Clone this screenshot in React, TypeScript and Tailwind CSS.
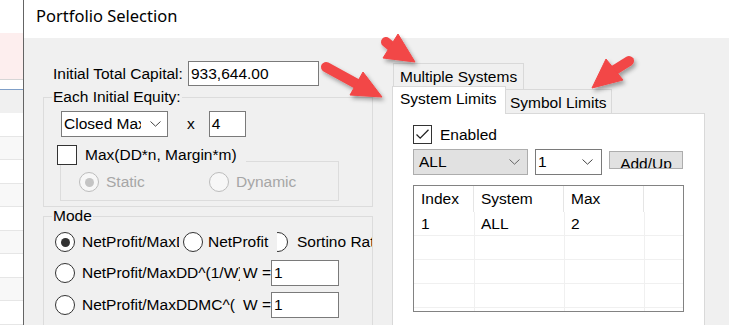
import React from "react";

const Chevron = ({ color = "#444" }: { color?: string }) => (
  <svg width="11" height="6" viewBox="0 0 11 6" className="shrink-0">
    <path d="M0.5 0.5 L5.5 5.2 L10.5 0.5" fill="none" stroke={color} strokeWidth="1" />
  </svg>
);

const Radio = ({ checked = false, disabled = false }: { checked?: boolean; disabled?: boolean }) => (
  <span
    className={
      "w-[20px] h-[20px] shrink-0 rounded-full border flex items-center justify-center " +
      (disabled ? "border-[#bcbcbc] bg-[#f7f7f7]" : "border-[#333333] bg-white")
    }
  >
    {checked && (
      <span className={"w-[9px] h-[9px] rounded-full " + (disabled ? "bg-[#c4c4c4]" : "bg-[#333333]")} />
    )}
  </span>
);

const LeftStrip = () => (
  <div className="w-[23px] shrink-0 flex flex-col bg-white">
    <div className="h-[33px] bg-white" />
    <div className="h-[47px] bg-[#fdeeee]" />
    <div className="h-px bg-[#d6d6d6]" />
    <div className="h-[9px] bg-white" />
    <div className="h-px bg-[#7f9fc8]" />
    <div className="h-[23px] bg-[#f0f0f0]" />
    <div className="h-px bg-[#7f9fc8]" />
    {[0, 1, 2, 3, 4, 5, 6, 7, 8].map((i) => (
      <div key={i} className={"h-[23.5px] shrink-0 border-b border-[#e6e6e6] " + (i % 2 ? "bg-[#f8f8f8]" : "bg-white")} />
    ))}
  </div>
);

const Arrows = () => (
  <svg className="absolute inset-0 pointer-events-none" width="729" height="325" viewBox="0 0 729 325">
    <defs>
      <filter id="sh" x="-30%" y="-30%" width="160%" height="160%">
        <feDropShadow dx="2" dy="3" stdDeviation="2" floodColor="#000" floodOpacity="0.35" />
      </filter>
    </defs>
    <g fill="#f24646" stroke="#f24646" filter="url(#sh)">
      <line x1="386" y1="42" x2="392" y2="47" strokeWidth="10" strokeLinecap="round" />
      <polygon points="398,34 415,62 383,58" strokeWidth="1" strokeLinejoin="round" />
      <line x1="326" y1="67" x2="357" y2="84" strokeWidth="10" strokeLinecap="round" />
      <polygon points="363,72 382,97 350,95" strokeWidth="1" strokeLinejoin="round" />
      <line x1="629" y1="61" x2="613" y2="71" strokeWidth="10" strokeLinecap="round" />
      <polygon points="606,59 623,80 592,88" strokeWidth="1" strokeLinejoin="round" />
    </g>
  </svg>
);

export default function App() {
  return (
    <div className="relative w-[729px] h-[325px] overflow-hidden flex bg-white text-black font-['Liberation_Sans',Arial,sans-serif] text-[15.5px] leading-[18px]">
      <LeftStrip />
      <div className="w-px shrink-0 bg-[#646464]" />
      <div className="flex-1 flex flex-col min-w-0">
        {/* title bar */}
        <div className="h-[38px] shrink-0 bg-white pl-[12px] pt-[4px]">
          <span className="font-['Noto_Sans',sans-serif] text-[16.5px] leading-[24px] text-black">Portfolio Selection</span>
        </div>
        {/* body */}
        <div className="h-[300px] shrink-0 bg-[#f0f0f0] flex pl-[19px]">
          {/* left column */}
          <div className="w-[330px] shrink-0 flex flex-col">
            <div className="mt-[23px] flex items-center h-[25px]">
              <span className="w-[145px] pl-[10px] shrink-0 whitespace-nowrap">Initial Total Capital:</span>
              <div className="w-[131px] h-[25px] border border-[#7a7a7a] bg-white flex items-center pl-[2px]">933,644.00</div>
            </div>

            <fieldset className="mt-[2px] w-[330px] min-w-0 border border-[#dcdcdc] pb-[5px]">
              <legend className="ml-[8px] px-[1px] leading-[18px]">Each Initial Equity:</legend>
              <div className="mt-[5px] pl-[17px] flex items-center h-[26px]">
                <div className="w-[107px] h-[26px] border border-[#7a7a7a] bg-white flex items-center pl-[2px] pr-[6px]">
                  <span className="w-[77px] overflow-hidden whitespace-nowrap">Closed Max</span>
                  <span className="ml-auto">
                    <Chevron />
                  </span>
                </div>
                <span className="ml-[19px]">x</span>
                <div className="ml-[14px] w-[37px] h-[26px] border border-[#7a7a7a] bg-white flex items-center pl-[2px]">4</div>
              </div>
              <div className="relative z-10 mt-[8px] ml-[13px] w-fit pr-[9px] bg-[#f0f0f0] flex items-center">
                <span className="w-[20px] h-[20px] border border-[#333333] bg-white shrink-0" />
                <span className="ml-[8px] whitespace-nowrap">Max(DD*n, Margin*m)</span>
              </div>
              <div className="-mt-[4px] ml-[16px] w-[279px] h-[40px] border border-[#dcdcdc] flex items-center pt-[2px] pl-[18px]">
                <div className="w-[130px] flex items-center">
                  <Radio checked disabled />
                  <span className="ml-[7px] text-[#a6a6a6]">Static</span>
                </div>
                <div className="flex items-center">
                  <Radio disabled />
                  <span className="ml-[7px] text-[#a6a6a6]">Dynamic</span>
                </div>
              </div>
            </fieldset>

            <fieldset className="w-[330px] min-w-0 h-[140px] shrink-0 border border-[#dcdcdc]">
              <legend className="ml-[8px] px-[1px] leading-[18px]">Mode</legend>
              <div className="mt-[4px] ml-[11px] w-[317px] overflow-hidden h-[26px] flex items-center">
                <div className="w-[124px] shrink-0 overflow-hidden flex items-center whitespace-nowrap">
                  <Radio checked />
                  <span className="ml-[7px]">NetProfit/MaxDD</span>
                </div>
                <div className="relative z-10 ml-[4px] w-[94px] shrink-0 overflow-hidden bg-[#f0f0f0] flex items-center whitespace-nowrap">
                  <Radio />
                  <span className="ml-[5px]">NetProfit</span>
                </div>
                <div className="-ml-[9px] flex items-center whitespace-nowrap shrink-0">
                  <Radio />
                  <span className="ml-[9px]">Sortino Ratio</span>
                </div>
              </div>
              <div className="mt-[5px] ml-[11px] h-[26px] flex items-center">
                <div className="w-[185px] shrink-0 overflow-hidden flex items-center whitespace-nowrap">
                  <Radio />
                  <span className="ml-[7px]">NetProfit/MaxDD^(1/W)</span>
                </div>
                <span className="ml-[3px] w-[28px] shrink-0 whitespace-nowrap">W =</span>
                <div className="w-[68px] h-[26px] border border-[#7a7a7a] bg-white flex items-center pl-[2px]">1</div>
              </div>
              <div className="mt-[6px] ml-[11px] h-[26px] flex items-center">
                <div className="w-[185px] shrink-0 overflow-hidden flex items-center whitespace-nowrap">
                  <Radio />
                  <span className="ml-[7px]">NetProfit/MaxDDMC^(</span>
                </div>
                <span className="ml-[3px] w-[28px] shrink-0 whitespace-nowrap">W =</span>
                <div className="w-[68px] h-[26px] border border-[#7a7a7a] bg-white flex items-center pl-[2px]">1</div>
              </div>
            </fieldset>
          </div>

          {/* right column: tab control */}
          <div className="ml-[19px] w-[313px] shrink-0 flex flex-col">
            <div className="mt-[25px] h-[26px] flex">
              <div className="ml-px w-[131px] h-[26px] border-l border-t border-r border-[#d9d9d9] bg-[#f0f0f0] pl-[6px] pt-[4px] whitespace-nowrap">
                Multiple Systems
              </div>
            </div>
            <div className="-mt-[3px] h-[27px] flex items-end">
              <div className="relative z-10 -mb-px w-[114px] h-[28px] border-l border-t border-r border-[#d9d9d9] bg-white pl-[7px] pt-[3px] whitespace-nowrap">
                System Limits
              </div>
              <div className="w-[106px] h-[24px] border-t border-r border-[#d9d9d9] bg-[#f0f0f0] pl-[4px] pt-[4px] whitespace-nowrap">
                Symbol Limits
              </div>
            </div>
            <div className="h-[240px] shrink-0 border border-[#d9d9d9] bg-white pl-[20px] pt-[11px]">
              <div className="flex items-center h-[19px]">
                <span className="w-[19px] h-[19px] border border-[#333333] bg-white flex items-center justify-center">
                  <svg width="15" height="13" viewBox="0 0 15 13">
                    <path d="M1.5 6.5 L5.2 10.2 L13.5 1.8" fill="none" stroke="#222" strokeWidth="1.3" />
                  </svg>
                </span>
                <span className="ml-[8px]">Enabled</span>
              </div>
              <div className="mt-[5px] flex items-start h-[26px]">
                <div className="w-[115px] h-[26px] border border-[#adadad] bg-[#e1e1e1] flex items-center pl-[5px] pr-[7px]">
                  <span>ALL</span>
                  <span className="ml-auto">
                    <Chevron color="#666" />
                  </span>
                </div>
                <div className="ml-[7px] w-[67px] h-[26px] border border-[#7a7a7a] bg-white flex items-center pl-[2px] pr-[8px]">
                  <span>1</span>
                  <span className="ml-auto">
                    <Chevron />
                  </span>
                </div>
                <div className="ml-[7px] mt-[2px] w-[74px] h-[18px] border border-[#adadad] bg-[#e1e1e1] overflow-hidden flex justify-center pt-[3px]">
                  <span className="whitespace-nowrap">Add/Up</span>
                </div>
              </div>
              <div className="mt-[10px] w-[271px] h-[127px] border border-[#828282] bg-white overflow-hidden flex flex-col">
                <div className="h-[26px] shrink-0 flex">
                  <div className="w-[60px] border-r border-[#e5e5e5] pl-[7px] flex items-center">Index</div>
                  <div className="w-[90px] border-r border-[#e5e5e5] pl-[7px] flex items-center">System</div>
                  <div className="w-[80px] border-r border-[#e5e5e5] pl-[7px] flex items-center">Max</div>
                  <div className="flex-1" />
                </div>
                {[
                  ["1", "ALL", "2"],
                  ["", "", ""],
                  ["", "", ""],
                  ["", "", ""],
                  ["", "", ""],
                ].map((r, i) => (
                  <div key={i} className="h-[24px] shrink-0 flex border-b border-[#f0f0f0]">
                    <div className="w-[61px] border-r border-[#f0f0f0] pl-[7px] flex items-center">{r[0]}</div>
                    <div className="w-[90px] border-r border-[#f0f0f0] pl-[6px] flex items-center">{r[1]}</div>
                    <div className="w-[80px] border-r border-[#f0f0f0] pl-[6px] flex items-center">{r[2]}</div>
                    <div className="flex-1" />
                  </div>
                ))}
              </div>
            </div>
          </div>
        </div>
      </div>
      <Arrows />
    </div>
  );
}
